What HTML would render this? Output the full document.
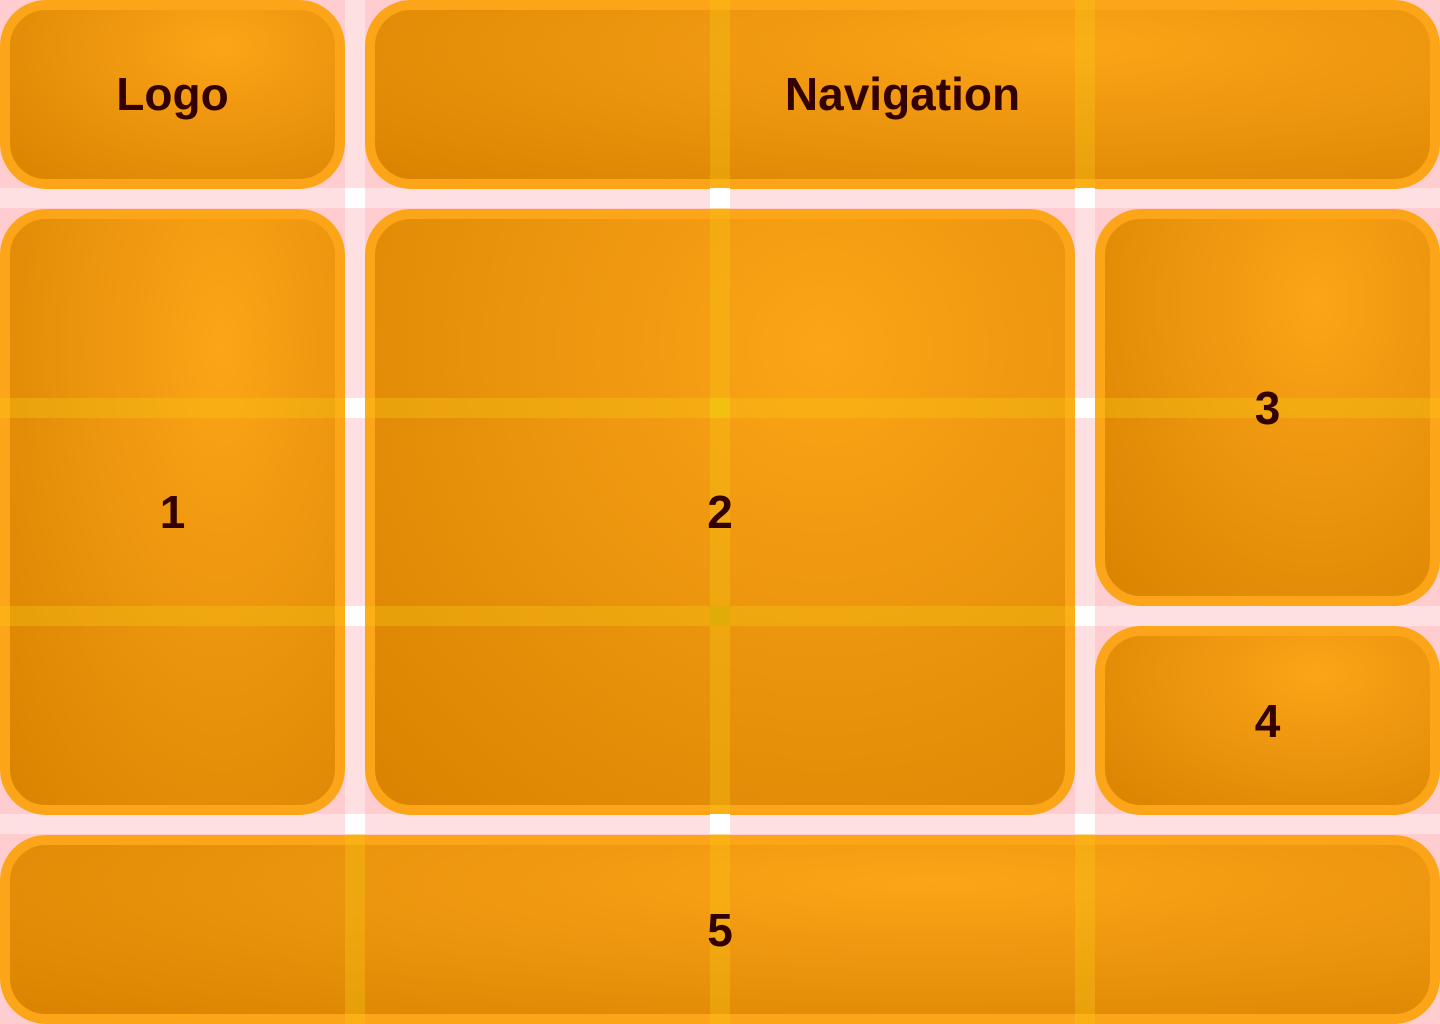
<!DOCTYPE html>
<html><head><meta charset="utf-8"><style>
html,body{margin:0;padding:0}
body{width:1440px;height:1024px;position:relative;overflow:hidden;background:#ffcdd0;font-family:"Liberation Sans",sans-serif}
.g{position:absolute;inset:0;display:grid;grid-template-columns:repeat(4,1fr);grid-template-rows:repeat(5,1fr);gap:20px}
.b{box-sizing:border-box;border:10px solid #fda518;border-radius:46px;background:radial-gradient(ellipse at 65% 22%,#fca516 0%,#ef9810 35%,#d98300 100%);display:flex;align-items:center;justify-content:center;color:#330000;font-weight:bold;font-size:46px}
.b span{position:relative;z-index:5}
.s{position:absolute;z-index:2}
.under{position:absolute;background:#ffe0e2;z-index:-1}
.over{background:rgba(245,200,20,0.35)}
.w{position:absolute;width:20px;height:20px;background:#fff;z-index:3}
</style></head><body>
<div class="under" style="top:188px;left:0;width:1440px;height:20px"></div>
<div class="under" style="top:398px;left:0;width:1440px;height:20px"></div>
<div class="under" style="top:606px;left:0;width:1440px;height:20px"></div>
<div class="under" style="top:814px;left:0;width:1440px;height:20px"></div>
<div class="under" style="left:345px;top:0;height:1024px;width:20px"></div>
<div class="under" style="left:710px;top:0;height:1024px;width:20px"></div>
<div class="under" style="left:1075px;top:0;height:1024px;width:20px"></div>
<div class="g">
<div class="b" style="grid-column:1;grid-row:1"><span>Logo</span></div>
<div class="b" style="grid-column:2/5;grid-row:1"><span>Navigation</span></div>
<div class="b" style="grid-column:1;grid-row:2/5"><span>1</span></div>
<div class="b" style="grid-column:2/4;grid-row:2/5"><span>2</span></div>
<div class="b" style="grid-column:4;grid-row:2/4"><span>3</span></div>
<div class="b" style="grid-column:4;grid-row:4"><span>4</span></div>
<div class="b" style="grid-column:1/5;grid-row:5"><span>5</span></div>
</div>
<div class="s over" style="top:398px;left:0;width:345px;height:20px"></div>
<div class="s over" style="top:398px;left:365px;width:710px;height:20px"></div>
<div class="s over" style="top:398px;left:1095px;width:345px;height:20px"></div>
<div class="s over" style="top:606px;left:0;width:345px;height:20px"></div>
<div class="s over" style="top:606px;left:365px;width:710px;height:20px"></div>
<div class="s over" style="left:710px;top:0;width:20px;height:188px"></div>
<div class="s over" style="left:1075px;top:0;width:20px;height:188px"></div>
<div class="s over" style="left:710px;top:208px;width:20px;height:190px"></div>
<div class="s over" style="left:710px;top:418px;width:20px;height:188px"></div>
<div class="s over" style="left:710px;top:626px;width:20px;height:188px"></div>
<div class="s over" style="left:345px;top:834px;width:20px;height:190px"></div>
<div class="s over" style="left:710px;top:834px;width:20px;height:190px"></div>
<div class="s over" style="left:1075px;top:834px;width:20px;height:190px"></div>
<div class="w" style="left:345px;top:188px"></div><div class="w" style="left:710px;top:188px"></div><div class="w" style="left:1075px;top:188px"></div>
<div class="w" style="left:345px;top:398px"></div><div class="w" style="left:1075px;top:398px"></div>
<div class="w" style="left:345px;top:606px"></div><div class="w" style="left:1075px;top:606px"></div>
<div class="w" style="left:345px;top:814px"></div><div class="w" style="left:710px;top:814px"></div><div class="w" style="left:1075px;top:814px"></div>
<div class="s" style="left:710px;top:398px;width:20px;height:20px;background:#f2c010"></div>
<div class="s" style="left:710px;top:606px;width:20px;height:20px;background:#e0ac08"></div>
</body></html>
